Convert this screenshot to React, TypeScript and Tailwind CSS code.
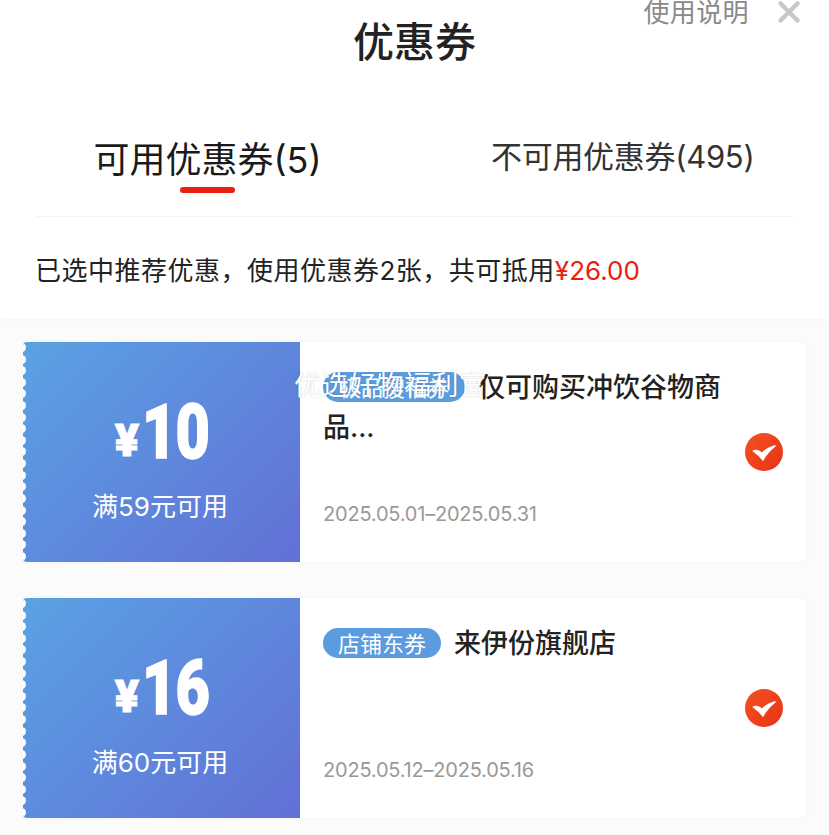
const FONT = "font-['Inter','Noto_Sans_CJK_SC',sans-serif]";

function CheckBadge() {
  return (
    <svg width="38" height="38" viewBox="0 0 38 38" className="shrink-0">
      <defs>
        <linearGradient id="checkFill" x1="0" y1="0" x2="1" y2="1">
          <stop offset="0" stopColor="#f4511e" />
          <stop offset="1" stopColor="#e9321a" />
        </linearGradient>
      </defs>
      <circle cx="19" cy="19" r="19" fill="url(#checkFill)" />
      <path d="M8.5 18C11.5 17 14.5 18 17 20.5C20 17 24 14.5 30 13C25 17 21 21 18 27C15.5 23.5 12.5 20.5 8.5 18z" fill="#fff" stroke="#fff" strokeWidth="1.6" strokeLinejoin="round" />
    </svg>
  );
}

function Coupon({ amount, rule, badge, badgeWidth, title, date, overlay }: {
  amount: string; rule: string; badge: string; badgeWidth: string; title: string; date: string; overlay?: boolean;
}) {
  return (
    <div className="relative flex h-[220px] rounded-md bg-white shadow-[0_0_5px_rgba(0,0,0,0.04)]">
      <div className="relative flex w-[277px] shrink-0 flex-col items-center overflow-hidden rounded-l-sm bg-[linear-gradient(135deg,#5aa2e3,#6270d6)] pt-[50px] text-white">
        {/* zigzag edge */}
        <div className="absolute -left-[6px] top-0 flex h-full flex-col justify-between py-[1px]">
          {Array.from({ length: 19 }).map((_, i) => (
            <span key={i} className="block h-[9px] w-[9px] rounded-full bg-white" />
          ))}
        </div>
        <div className="flex h-[80px] items-end font-['Roboto',sans-serif]">
          <span className="mb-[9px] text-[45px] font-black leading-none [-webkit-text-stroke:1px_white]">¥</span>
          <span className="ml-[3px] -mr-[20px] origin-left scale-x-[0.78] text-[76px] font-black leading-[80px] tracking-[-1px] [-webkit-text-stroke:1.5px_white]">{amount}</span>
        </div>
        <div className="mt-[18px] -ml-[3px] whitespace-nowrap text-[26px] leading-[34px]">{rule}</div>
      </div>
      <div className="relative flex min-w-0 flex-1 items-start px-[23px]">
        <div className="flex h-full min-w-0 flex-1 flex-col pt-[26px] pb-[35px]">
          <div className="w-[400px] text-[27px] font-medium leading-[40px] text-[#222]">
            <span className={`mr-[13px] inline-block h-[30px] rounded-full bg-[#5b9bdf] text-center align-[1px] text-[22px] font-normal leading-[32px] text-white ${badgeWidth}`}>
              {badge}
            </span>
            {title}
          </div>
          <div className="mt-auto text-[20px] leading-[26px] tracking-[-0.2px] text-[#999]">{date}</div>
        </div>
        <div className="self-center"><CheckBadge /></div>
        {overlay && (
          <div className="absolute -left-[6px] top-[26px] whitespace-nowrap text-[27px] leading-[36px] tracking-[0.5px] text-white [text-shadow:0_0_2px_rgba(0,0,0,0.22)]">
            优选好物福利官
          </div>
        )}
      </div>
    </div>
  );
}

export default function App() {
  return (
    <div className={`h-[835px] w-[829px] overflow-hidden bg-[#fbfbfb] ${FONT}`}>
      <div className="bg-white shadow-[0_1px_4px_rgba(0,0,0,0.02)]">
        <header className="grid h-[124px] grid-cols-[1fr_auto_1fr]">
          <div />
          <h1 className="pt-[16px] text-[41px] font-medium leading-[52px] text-[#222]">优惠券</h1>
          <div className="flex items-start justify-end gap-[28px] pr-[28px]">
            <span className="-mt-[5px] text-[26px] leading-[36px] tracking-[0.4px] text-[#8a8a8a]">使用说明</span>
            <svg width="24" height="24" viewBox="0 0 24 24">
              <path d="M3.5 3.5L20.5 20.5M20.5 3.5L3.5 20.5" stroke="#c8c8c8" strokeWidth="4.5" strokeLinecap="round" />
            </svg>
          </div>
        </header>

        <div className="mx-[36px] flex h-[93px] items-start border-b border-[#f4f4f4]">
          <div className="ml-[58px] flex w-[227px] flex-col items-center">
            <div className="whitespace-nowrap pt-[2px] text-[36px] font-normal leading-[68px] text-[#1a1a1a]">可用优惠券(5)</div>
            <div className="mt-[-7px] h-[6px] w-[55px] rounded-full bg-[#e8210f]" />
          </div>
          <div className="ml-[170px] whitespace-nowrap text-[31px] leading-[66px] tracking-[-0.3px] text-[#333]">不可用优惠券(495)</div>
        </div>

        <div className="flex h-[102px] items-start pl-[35px] pt-[36px] text-[26px] leading-[36px] text-[#222]">
          <span className="tracking-[0.5px]">已选中推荐优惠，使用优惠券2张，共可抵用</span><span className="text-[#e8210f]">¥26.00</span>
        </div>
      </div>

      <div className="flex flex-col gap-[36px] px-[23px] pt-[23px]">
        <Coupon amount="10" rule="满59元可用" badge="极品搜福券" badgeWidth="w-[142px]" title="仅可购买冲饮谷物商品..." date="2025.05.01–2025.05.31" overlay />
        <Coupon amount="16" rule="满60元可用" badge="店铺东券" badgeWidth="w-[118px]" title="来伊份旗舰店" date="2025.05.12–2025.05.16" />
      </div>
    </div>
  );
}
